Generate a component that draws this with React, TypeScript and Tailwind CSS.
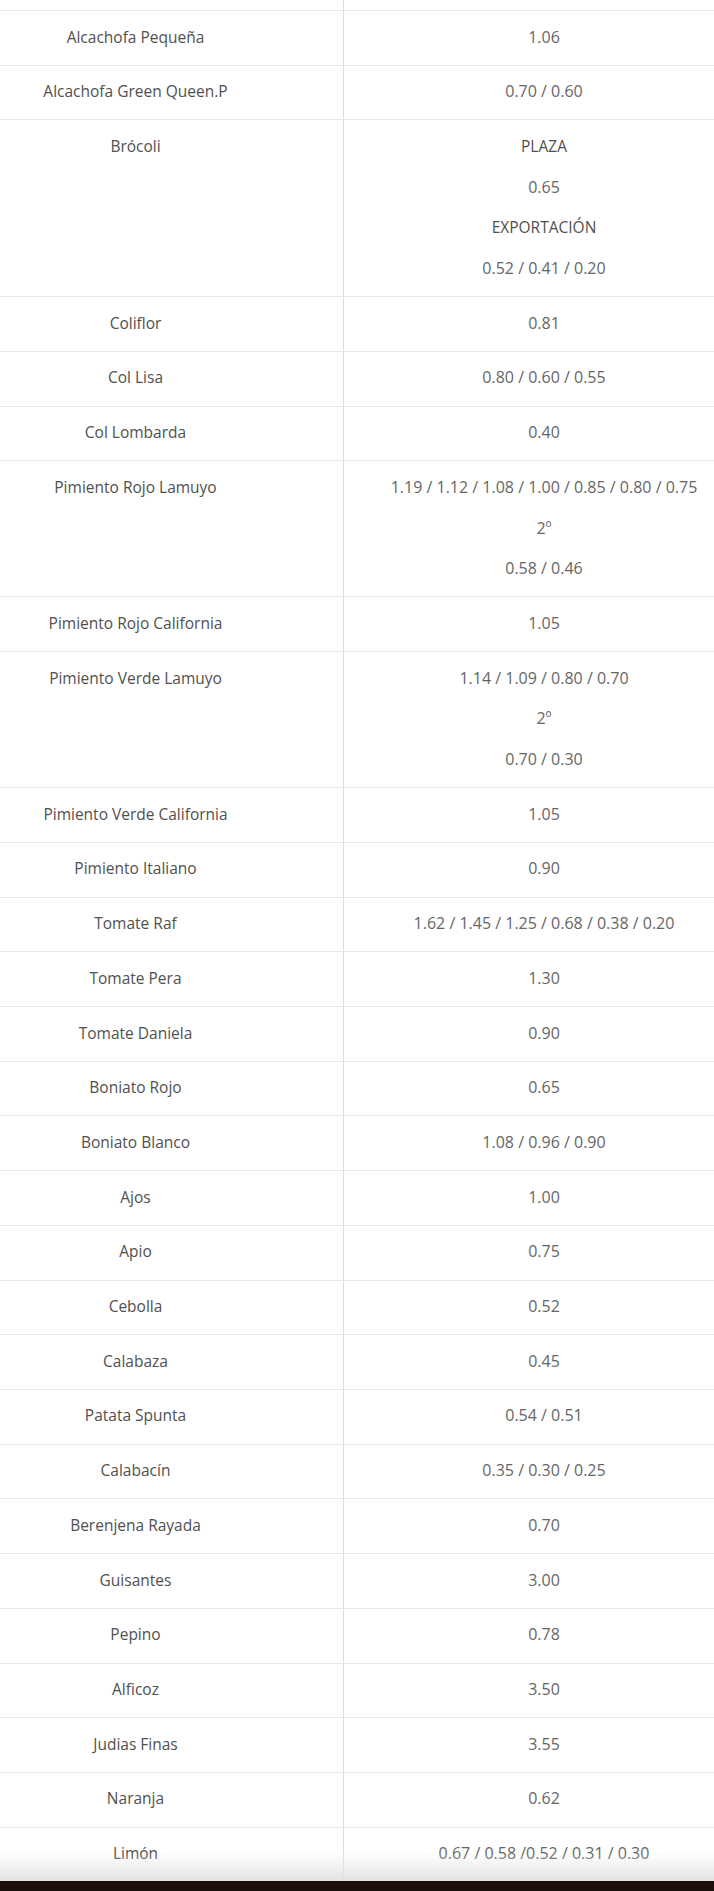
import React from "react";

type Row = { name: string; lines: { text: string; strong?: boolean }[] };

const rows: Row[] = [
  { name: "Alcachofa Pequeña", lines: [{ text: "1.06" }] },
  { name: "Alcachofa Green Queen.P", lines: [{ text: "0.70 / 0.60" }] },
  {
    name: "Brócoli",
    lines: [
      { text: "PLAZA", strong: true },
      { text: "0.65" },
      { text: "EXPORTACIÓN", strong: true },
      { text: "0.52 / 0.41 / 0.20" },
    ],
  },
  { name: "Coliflor", lines: [{ text: "0.81" }] },
  { name: "Col Lisa", lines: [{ text: "0.80 / 0.60 / 0.55" }] },
  { name: "Col Lombarda", lines: [{ text: "0.40" }] },
  {
    name: "Pimiento Rojo Lamuyo",
    lines: [
      { text: "1.19 / 1.12 / 1.08 / 1.00 / 0.85 / 0.80 / 0.75" },
      { text: "2º" },
      { text: "0.58 / 0.46" },
    ],
  },
  { name: "Pimiento Rojo California", lines: [{ text: "1.05" }] },
  {
    name: "Pimiento Verde Lamuyo",
    lines: [{ text: "1.14 / 1.09 / 0.80 / 0.70" }, { text: "2º" }, { text: "0.70 / 0.30" }],
  },
  { name: "Pimiento Verde California", lines: [{ text: "1.05" }] },
  { name: "Pimiento Italiano", lines: [{ text: "0.90" }] },
  { name: "Tomate Raf", lines: [{ text: "1.62 / 1.45 / 1.25 / 0.68 / 0.38 / 0.20" }] },
  { name: "Tomate Pera", lines: [{ text: "1.30" }] },
  { name: "Tomate Daniela", lines: [{ text: "0.90" }] },
  { name: "Boniato Rojo", lines: [{ text: "0.65" }] },
  { name: "Boniato Blanco", lines: [{ text: "1.08 / 0.96 / 0.90" }] },
  { name: "Ajos", lines: [{ text: "1.00" }] },
  { name: "Apio", lines: [{ text: "0.75" }] },
  { name: "Cebolla", lines: [{ text: "0.52" }] },
  { name: "Calabaza", lines: [{ text: "0.45" }] },
  { name: "Patata Spunta", lines: [{ text: "0.54 / 0.51" }] },
  { name: "Calabacín", lines: [{ text: "0.35 / 0.30 / 0.25" }] },
  { name: "Berenjena Rayada", lines: [{ text: "0.70" }] },
  { name: "Guisantes", lines: [{ text: "3.00" }] },
  { name: "Pepino", lines: [{ text: "0.78" }] },
  { name: "Alficoz", lines: [{ text: "3.50" }] },
  { name: "Judias Finas", lines: [{ text: "3.55" }] },
  { name: "Naranja", lines: [{ text: "0.62" }] },
  { name: "Limón", lines: [{ text: "0.67 / 0.58 /0.52 / 0.31 / 0.30" }] },
];

export default function App() {
  return (
    <div
      className="w-[714px] h-[1891px] overflow-hidden bg-white flex flex-col"
      style={{ fontFamily: '"Open Sans", "Noto Sans", sans-serif' }}
    >
      <div className="relative flex-1 overflow-hidden">
        <div className="flex h-[10px]">
          <div className="w-[344px] shrink-0 border-r border-[#dcdcdc]" />
          <div className="flex-1" />
        </div>
        {rows.map((r) => (
          <div key={r.name} className="flex items-stretch border-t border-[#e6e6e6]">
            <div className="w-[344px] shrink-0 border-r border-[#dcdcdc] pr-[72px] pt-[5.5px] pb-[7.5px] text-center text-[15.5px] font-medium leading-[40.7px] text-[#505050]">
              {r.name}
            </div>
            <div className="flex-1 pl-[30px] pt-[5.5px] pb-[7.5px] text-center text-[16px] leading-[40.7px] text-[#666666]">
              {r.lines.map((l, i) => (
                <div key={i} className={l.strong ? "text-[15.5px] font-medium text-[#505050]" : ""}>
                  {l.text}
                </div>
              ))}
            </div>
          </div>
        ))}
        <div className="pointer-events-none absolute bottom-0 left-0 right-0 h-[28px] bg-gradient-to-b from-[rgba(255,255,255,0)] to-[#e2e2e2]" />
      </div>
      <div className="h-[10px] shrink-0 bg-[#1b0e0b]" />
    </div>
  );
}
